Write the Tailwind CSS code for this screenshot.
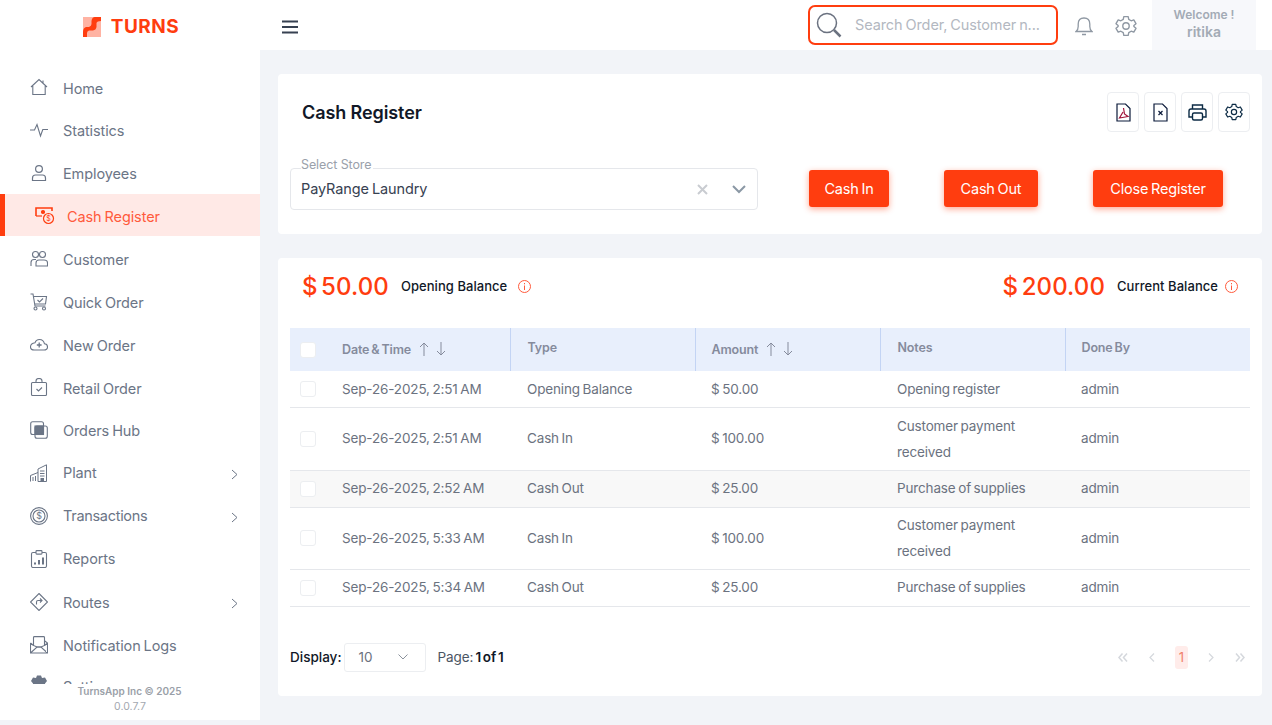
<!DOCTYPE html>
<html>
<head>
    <title>Cash Register</title>
    <script src="https://cdn.jsdelivr.net/npm/@tailwindcss/browser@4"></script>
</head>
<body class="bg-[#f2f4f8] h-[725px] overflow-hidden font-['Inter',sans-serif] text-[#6b7280]">
<div class="flex h-[725px] items-start">
    <!-- Sidebar -->
    <aside class="w-[260px] h-[720px] bg-white shrink-0 overflow-hidden">
        <div class="h-[65px] flex items-center justify-center pl-[2px] pb-[12px] gap-[10px]">
            <svg width="18" height="20" viewBox="0 0 18 20"><rect width="18" height="20" fill="#ffb3a3"/><path d="M18 0H12Q9 0 8.500 4V7Q8.500 9 6 10H3Q0 11 0 15V20H4V16Q4 14 6 13.500H10Q13 13 13.500 10V6Q14 4 18 4Z" fill="#ff3d0f"/></svg>
            <span class="text-[#ff3d0f] text-[19px] leading-none font-bold tracking-[0.5px]">TURNS</span>
        </div>
        <nav class="h-[619px] overflow-hidden text-[14.5px] text-[#6b7586] tracking-[-0.1px] [word-spacing:-1px]">
            <a class="h-[42.86px] flex items-center pl-[30px] gap-[15px]">
                <svg class="w-[18px] h-[18px] translate-y-[1px]" viewBox="0 0 18 18" fill="none" stroke="#6b7586" stroke-width="1.1"><path d="M1 9 9 1.500 17 9M2.800 8V16.500H15.200V8M13 2.500V5"/></svg>
                <span class="pt-[5px]">Home</span>
            </a>
            <a class="h-[42.86px] flex items-center pl-[30px] gap-[15px]">
                <svg class="w-[18px] h-[18px] translate-y-[1px]" viewBox="0 0 18 18" fill="none" stroke="#6b7586" stroke-width="1.1"><path d="M0 9H4.500L7 3.500 10.500 15 12.800 8.500H18"/></svg>
                <span class="pt-[4px]">Statistics</span>
            </a>
            <a class="h-[42.86px] flex items-center pl-[30px] gap-[15px]">
                <svg class="w-[18px] h-[18px] translate-y-[1px]" viewBox="0 0 18 18" fill="none" stroke="#6b7586" stroke-width="1.2"><circle cx="9" cy="5" r="3.400"/><path d="M2.500 16.500V14Q2.500 11 5.500 11H12.500Q15.500 11 15.500 14V16.500Z"/></svg>
                <span class="pt-[4px]">Employees</span>
            </a>
            <a class="h-[42.86px] flex items-center pl-[30px] gap-[12px] bg-[#ffe9e6] border-l-[5px] border-[#ff3d0f] text-[#ff5a3c]">
                <svg class="w-[20px] h-[20px]" viewBox="0 0 20 20" fill="none" stroke="#ff3d0f" stroke-width="1.200"><path d="M1 11V3H17V6M1 3H6M11 3H17" stroke-width="1.600"/><circle cx="8" cy="7" r="1.500" fill="#ff3d0f"/><path d="M1 11H7"/><circle cx="13.500" cy="13.500" r="5"/><text x="13.500" y="16" font-size="7" text-anchor="middle" fill="#ff3d0f" stroke="none">$</text></svg>
                <span class="pt-[4px]">Cash Register</span>
            </a>
            <a class="h-[42.86px] flex items-center pl-[30px] gap-[15px]">
                <svg class="w-[18px] h-[18px] translate-y-[1px]" viewBox="0 0 18 18" fill="none" stroke="#6b7586" stroke-width="1.1"><circle cx="5.500" cy="4.500" r="3"/><circle cx="12.500" cy="4.500" r="3"/><path d="M1 16V12.500Q1 9.500 4 9.500H6M6 16V13Q6 10 9 10H14Q17.500 10 17.500 13V16Z"/></svg>
                <span class="pt-[5px]">Customer</span>
            </a>
            <a class="h-[42.86px] flex items-center pl-[30px] gap-[15px]">
                <svg class="w-[18px] h-[18px] translate-y-[1px]" viewBox="0 0 18 18" fill="none" stroke="#6b7586" stroke-width="1.1"><path d="M.5 1H3L5 13H15.500M4 3.500H16.500L15.500 11H5"/><path d="M7.500 7 9.500 9 13 5.500"/><circle cx="5.500" cy="15.500" r="1.500"/><circle cx="14" cy="15.500" r="1.500"/></svg>
                <span class="pt-[5px]">Quick Order</span>
            </a>
            <a class="h-[42.86px] flex items-center pl-[30px] gap-[15px]">
                <svg class="w-[18px] h-[18px] translate-y-[1px]" viewBox="0 0 18 18" fill="none" stroke="#6b7586" stroke-width="1.1"><path d="M4.500 14H14Q17.500 14 17.500 11 17.500 8 14.500 7.800 13.500 3.500 9.500 3.500 6 3.500 5 6.800 .5 7.500 .5 11 .5 14 4.500 14Z"/><path d="M9.200 6.500V11.500M6.800 9H11.600" stroke-width="1.300"/></svg>
                <span class="pt-[4px]">New Order</span>
            </a>
            <a class="h-[42.86px] flex items-center pl-[30px] gap-[15px]">
                <svg class="w-[18px] h-[18px] translate-y-[1px]" viewBox="0 0 18 18" fill="none" stroke="#6b7586" stroke-width="1.1"><rect x="1.500" y="4.500" width="15" height="13" rx="1"/><path d="M6 4.500V3Q6 .5 9 .5 12 .5 12 3V4.500M6.500 11 8.500 13 12 9.500"/></svg>
                <span class="pt-[4px]">Retail Order</span>
            </a>
            <a class="h-[42.86px] flex items-center pl-[30px] gap-[15px]">
                <svg class="w-[18px] h-[18px] translate-y-[1px]" viewBox="0 0 18 18" fill="none" stroke="#6b7586" stroke-width="1.1"><rect x="5" y="5" width="8.500" height="8.500" fill="#6b7586"/><rect x=".7" y=".7" width="12.800" height="12.800" rx="2"/><rect x="5" y="5" width="12.300" height="12.300" rx="2"/></svg>
                <span class="pt-[4px]">Orders Hub</span>
            </a>
            <a class="h-[42.86px] flex items-center pl-[30px] gap-[15px]">
                <svg class="w-[18px] h-[18px] translate-y-[1px]" viewBox="0 0 18 18" fill="none" stroke="#6b7586" stroke-width="1"><path d="M8 17.500V5L16.500 .8V17.500ZM.5 17.500V11.500L8 8.500M10 7H14.500M10 9.500H14.500M10 12H14.500M3 13V17M5.500 12V17"/><rect x="11" y="14.500" width="2.500" height="3" fill="#6b7586"/></svg>
                <span class="pt-[2px]">Plant</span>
                <svg class="w-[7px] h-[11px] ml-auto mr-[22px] mt-[5px]" viewBox="0 0 7 11" fill="none" stroke="#6b7586" stroke-width="1"><path d="M1 1 6 5.500 1 10"/></svg>
            </a>
            <a class="h-[42.86px] flex items-center pl-[30px] gap-[15px]">
                <svg class="w-[18px] h-[18px] translate-y-[1px]" viewBox="0 0 18 18" fill="none" stroke="#6b7586" stroke-width="1.1"><circle cx="9" cy="9" r="8.400"/><circle cx="9" cy="9" r="6"/><text x="9" y="12" font-size="9" text-anchor="middle" fill="#6b7586" stroke="none">$</text></svg>
                <span class="pt-[2px] tracking-[-0.3px]">Transactions</span>
                <svg class="w-[7px] h-[11px] ml-auto mr-[22px] mt-[5px]" viewBox="0 0 7 11" fill="none" stroke="#6b7586" stroke-width="1"><path d="M1 1 6 5.500 1 10"/></svg>
            </a>
            <a class="h-[42.86px] flex items-center pl-[30px] gap-[15px]">
                <svg class="w-[18px] h-[18px] translate-y-[1px]" viewBox="0 0 18 18" fill="none" stroke="#6b7586" stroke-width="1.1"><rect x="1.500" y="2.500" width="15" height="15" rx="1.500"/><rect x="6" y=".6" width="6" height="3.500" rx=".8" fill="white"/><path d="M5 14.500V12.500M9 14.500V10M13 14.500V7.500" stroke-width="2"/></svg>
                <span class="pt-[2px]">Reports</span>
            </a>
            <a class="h-[42.86px] flex items-center pl-[30px] gap-[15px]">
                <svg class="w-[18px] h-[18px] translate-y-[1px]" viewBox="0 0 18 18" fill="none" stroke="#6b7586" stroke-width="1.1"><path d="M9 .5 17.500 9 9 17.500 .5 9Z"/><path d="M6.500 11.500V9Q6.500 7.500 8 7.500H12M10 5.500 12 7.500 10 9.500"/></svg>
                <span class="pt-[4px]">Routes</span>
                <svg class="w-[7px] h-[11px] ml-auto mr-[22px] mt-[5px]" viewBox="0 0 7 11" fill="none" stroke="#6b7586" stroke-width="1"><path d="M1 1 6 5.500 1 10"/></svg>
            </a>
            <a class="h-[42.86px] flex items-center pl-[30px] gap-[15px]">
                <svg class="w-[18px] h-[18px] translate-y-[1px]" viewBox="0 0 18 18" fill="none" stroke="#6b7586" stroke-width="1.1"><path d="M.5 7V17H17.500V7L14.500 4.800M.5 17 7 11H11L17.500 17M.5 7 3.500 9.500M17.500 7 14.500 9.500"/><path d="M3.500 9.500V1.500Q3.500 .6 4.500 .6H13.500Q14.500 .6 14.500 1.500V9.500L11 11H7Z"/></svg>
                <span class="pt-[4px]">Notification Logs</span>
            </a>
            <a class="h-[42.86px] flex items-center pl-[30px] gap-[15px]">
                <svg class="w-[18px] h-[18px] -translate-y-[2px]" viewBox="0 0 18 18" fill="#6b7586"><path d="M7 .5H11L12 3 15 2.500 17 6 15 8.500V10L17 12.500 15 16 12 15.500 11 18H7L6 15.500 3 16 1 12.500 3 10V8.500L1 6 3 2.500 6 3Z"/></svg>
                <span>Settings</span>
            </a>
        </nav>
        <div class="text-center">
            <p class="text-[10px] leading-[15px] font-semibold text-[#9a9fa8] pr-[1px]">TurnsApp Inc © 2025</p>
            <p class="text-[10.500px] leading-[16px] text-[#a3a8b0]">0.0.7.7</p>
        </div>
    </aside>

    <div class="flex-1 min-w-0">
        <!-- Top bar -->
        <header class="h-[50px] bg-white flex items-center pl-[22px]">
            <svg class="w-[16px] h-[14px] mt-[4px]" viewBox="0 0 16 14" fill="none" stroke="#374151" stroke-width="2"><path d="M0 1.500H16M0 7H16M0 12.500H16"/></svg>
            <div class="ml-auto w-[250px] h-[40px] border-2 border-[#ff3d0f] rounded-[7px] flex items-center pl-[6px]">
                <svg class="w-[26px] h-[26px] shrink-0" viewBox="0 0 26 26" fill="none" stroke="#6b7280"><circle cx="11" cy="11" r="9.500" stroke-width="1.500"/><path d="M18 18 24.500 24.500" stroke-width="2.500"/></svg>
                <span class="ml-[13px] text-[14.5px] text-[#b3b8c1] whitespace-nowrap tracking-[-0.1px] [word-spacing:-1px]">Search Order, Customer n...</span>
            </div>
            <svg class="w-[18px] h-[20px] ml-[17px] mt-[2px]" viewBox="0 0 18 20" fill="none" stroke="#8f98a3" stroke-width="1.300"><path d="M1 15.500H17Q14.800 14 14.800 10.500V8Q14.800 2 9 2 3.200 2 3.200 8V10.500Q3.200 14 1 15.500ZM7 18.500H11" /></svg>
            <svg class="w-[22px] h-[22px] ml-[22px] mt-[2px]" viewBox="0 0 24 24" fill="none" stroke="#8f98a3" stroke-width="1.500"><circle cx="12" cy="12" r="3.500"/><path d="M9.600 1.800H14.400L15 4.800 17.600 6.300 20.500 5.300 22.900 9.500 20.600 11.500V12.500L22.900 14.500 20.500 18.700 17.600 17.700 15 19.200 14.400 22.200H9.600L9 19.200 6.400 17.700 3.500 18.700 1.100 14.500 3.400 12.500V11.500L1.100 9.500 3.500 5.300 6.400 6.300 9 4.800Z" stroke-linejoin="round"/></svg>
            <div class="w-[104px] h-[50px] ml-[15px] mr-[16px] bg-[#f7f8fb] text-center pt-[7px] text-[#a3abb5] font-semibold">
                <p class="text-[12px] leading-[15px]">Welcome !</p>
                <p class="text-[14px] leading-[20px]">ritika</p>
            </div>
        </header>

        <div class="pl-[18px] pr-[10px]">
            <!-- Register card -->
            <section class="mt-[24px] h-[160px] bg-white rounded-[4px] px-[12px]">
                <div class="flex items-center h-[76px] pt-[1px]">
                    <h1 class="ml-[12px] text-[18px] font-semibold text-[#111827] tracking-[-0.1px]">Cash Register</h1>
                    <div class="ml-auto flex gap-[5px] mt-[-1px]">
                        <button class="w-[32px] h-[40px] border border-[#eceef1] rounded-[4px] flex items-center justify-center">
                            <svg width="15" height="19" viewBox="0 0 15 19" fill="none" stroke="#0b1a3a" stroke-width="1.200"><path d="M1 1H9.500L14 5.500V18H1Z"/><path d="M7.500 5 8.500 11 12 13.500 3.500 15 7 9" stroke="#a1163c"/></svg>
                        </button>
                        <button class="w-[32px] h-[40px] border border-[#eceef1] rounded-[4px] flex items-center justify-center">
                            <svg width="15" height="19" viewBox="0 0 15 19" fill="none" stroke="#0b1a3a" stroke-width="1.200"><path d="M1 1H9.500L14 5.500V18H1Z"/><path d="M5.500 8 9.500 12M9.500 8 5.500 12"/></svg>
                        </button>
                        <button class="w-[32px] h-[40px] border border-[#eceef1] rounded-[4px] flex items-center justify-center">
                            <svg width="19" height="17" viewBox="0 0 19 17" fill="none" stroke="#0b2a44" stroke-width="1.400"><path d="M4.500 5V1H14.500V5M4.500 13H1V7Q1 5 3 5H16Q18 5 18 7V13H14.500"/><rect x="4.500" y="9" width="10" height="7" rx="1.500"/></svg>
                        </button>
                        <button class="w-[32px] h-[40px] border border-[#eceef1] rounded-[4px] flex items-center justify-center">
                            <svg width="18" height="18" viewBox="0 0 24 24" fill="none" stroke="#0b2a44" stroke-width="1.600"><circle cx="12" cy="12" r="3.500"/><path d="M9.600 1.800H14.400L15 4.800 17.600 6.300 20.500 5.300 22.900 9.500 20.600 11.500V12.500L22.900 14.500 20.500 18.700 17.600 17.700 15 19.200 14.400 22.200H9.600L9 19.200 6.400 17.700 3.500 18.700 1.100 14.500 3.400 12.500V11.500L1.100 9.500 3.500 5.300 6.400 6.300 9 4.800Z" stroke-linejoin="round"/></svg>
                        </button>
                    </div>
                </div>
                <div class="flex items-start mt-[18px]">
                    <div class="relative w-[468px] h-[42px] border border-[#e5e7eb] rounded-[4px] flex items-center pl-[10px]">
                        <span class="absolute left-[10px] -top-[12px] bg-white pr-[2px] text-[12.500px] leading-[16px] text-[#9aa1ab] tracking-[-0.1px]">Select Store</span>
                        <span class="text-[14.500px] text-[#374151] tracking-[-0.1px] [word-spacing:-1px]">PayRange Laundry</span>
                        <svg class="ml-auto w-[11px] h-[11px]" viewBox="0 0 11 11" fill="none" stroke="#c9ccd1" stroke-width="2"><path d="M1 1 10 10M10 1 1 10"/></svg>
                        <svg class="ml-[24px] mr-[11px] w-[14px] h-[9px]" viewBox="0 0 14 9" fill="none" stroke="#8b98a5" stroke-width="2"><path d="M1 1 7 7 13 1"/></svg>
                    </div>
                    <button class="ml-[51px] mt-[2px] w-[80px] h-[37px] rounded-[3px] bg-[#ff3d0f] text-white text-[14.500px] tracking-[-0.2px] [word-spacing:-1px] shadow-[0_2px_6px_rgba(255,61,15,0.45)]">Cash In</button>
                    <button class="ml-[55px] mt-[2px] w-[94px] h-[37px] rounded-[3px] bg-[#ff3d0f] text-white text-[14.500px] tracking-[-0.2px] [word-spacing:-1px] shadow-[0_2px_6px_rgba(255,61,15,0.45)]">Cash Out</button>
                    <button class="ml-[55px] mt-[2px] w-[130px] h-[37px] rounded-[3px] bg-[#ff3d0f] text-white text-[14.500px] tracking-[-0.2px] [word-spacing:-1px] shadow-[0_2px_6px_rgba(255,61,15,0.45)]">Close Register</button>
                </div>
            </section>

            <!-- Balance and table card -->
            <section class="mt-[24px] h-[438px] bg-white rounded-[4px] px-[12px]">
                <div class="h-[70px] flex items-center pb-[13px] pr-[12px]">
                    <span class="ml-[12px] text-[24px] font-medium text-[#ff3d0f] [word-spacing:-3px] tracking-[0.1px]">$ 50.00</span>
                    <span class="ml-[12px] text-[13px] font-medium text-[#111827] tracking-[0.05px]">Opening Balance</span>
                    <svg class="ml-[11px] w-[13px] h-[13px]" viewBox="0 0 13 13" fill="none" stroke="#ff5a3c"><circle cx="6.500" cy="6.500" r="6"/><path d="M6.500 5.500V10M6.500 3V4.300"/></svg>
                    <span class="ml-auto text-[24px] font-medium text-[#ff3d0f] [word-spacing:-3px] tracking-[0.1px]">$ 200.00</span>
                    <span class="ml-[12px] text-[13px] font-medium text-[#111827] tracking-[0.05px]">Current Balance</span>
                    <svg class="ml-[7px] w-[13px] h-[13px]" viewBox="0 0 13 13" fill="none" stroke="#ff5a3c"><circle cx="6.500" cy="6.500" r="6"/><path d="M6.500 5.500V10M6.500 3V4.300"/></svg>
                </div>
                <table class="w-[960px] table-fixed text-[13.500px] text-[#6b7280] tracking-[-0.15px] [word-spacing:-1px]">
                    <colgroup><col class="w-[52px]"><col class="w-[168px]"><col class="w-[185px]"><col class="w-[185px]"><col class="w-[185px]"><col class="w-[185px]"></colgroup>
                    <thead class="bg-[#e8effc] text-[12.500px] text-[#858b9c] text-left">
                        <tr class="h-[43px]">
                            <th class="pl-[10px]"><div class="w-[16px] h-[16px] bg-white border border-[#eceef1] rounded-[3px]"></div></th>
                            <th class="font-semibold border-r border-[#c3d4f4]">
                                <div class="flex items-center pt-[2px]">Date &amp; Time
                                    <svg class="ml-[8px] w-[10px] h-[14px] -translate-y-[2px]" viewBox="0 0 10 14" fill="none" stroke="#858b9c"><path d="M5 14V1M1 5 5 1 9 5"/></svg>
                                    <svg class="ml-[7px] w-[10px] h-[14px] -translate-y-[2px]" viewBox="0 0 10 14" fill="none" stroke="#858b9c"><path d="M5 0V13M1 9 5 13 9 9"/></svg>
                                </div>
                            </th>
                            <th class="pl-[17px] pb-[2px] font-semibold border-r border-[#c3d4f4]">Type</th>
                            <th class="pl-[16px] font-semibold border-r border-[#c3d4f4]">
                                <div class="flex items-center pt-[2px]">Amount
                                    <svg class="ml-[8px] w-[10px] h-[14px] -translate-y-[2px]" viewBox="0 0 10 14" fill="none" stroke="#858b9c"><path d="M5 14V1M1 5 5 1 9 5"/></svg>
                                    <svg class="ml-[7px] w-[10px] h-[14px] -translate-y-[2px]" viewBox="0 0 10 14" fill="none" stroke="#858b9c"><path d="M5 0V13M1 9 5 13 9 9"/></svg>
                                </div>
                            </th>
                            <th class="pl-[17px] pb-[2px] font-semibold border-r border-[#c3d4f4]">Notes</th>
                            <th class="pl-[16px] pb-[2px] font-semibold">Done By</th>
                        </tr>
                    </thead>
                    <tbody>
                        <tr class="h-[36px] border-b border-[#e5e7eb]">
                            <td class="pl-[10px]"><div class="w-[16px] h-[16px] border border-[#eceef1] rounded-[3px]"></div></td>
                            <td>Sep-26-2025, 2:51 AM</td><td class="pl-[17px]">Opening Balance</td><td class="pl-[16px]">$ 50.00</td><td class="pl-[17px]">Opening register</td><td class="pl-[16px]">admin</td>
                        </tr>
                        <tr class="h-[63px] border-b border-[#e5e7eb]">
                            <td class="pl-[10px]"><div class="w-[16px] h-[16px] border border-[#eceef1] rounded-[3px]"></div></td>
                            <td>Sep-26-2025, 2:51 AM</td><td class="pl-[17px]">Cash In</td><td class="pl-[16px]">$ 100.00</td><td class="pl-[17px] leading-[26px]">Customer payment received</td><td class="pl-[16px]">admin</td>
                        </tr>
                        <tr class="h-[37px] border-b border-[#e5e7eb] bg-[#f8f8f8]">
                            <td class="pl-[10px]"><div class="w-[16px] h-[16px] bg-white border border-[#eceef1] rounded-[3px]"></div></td>
                            <td>Sep-26-2025, 2:52 AM</td><td class="pl-[17px]">Cash Out</td><td class="pl-[16px]">$ 25.00</td><td class="pl-[17px]">Purchase of supplies</td><td class="pl-[16px]">admin</td>
                        </tr>
                        <tr class="h-[62px] border-b border-[#e5e7eb]">
                            <td class="pl-[10px]"><div class="w-[16px] h-[16px] border border-[#eceef1] rounded-[3px]"></div></td>
                            <td>Sep-26-2025, 5:33 AM</td><td class="pl-[17px]">Cash In</td><td class="pl-[16px]">$ 100.00</td><td class="pl-[17px] leading-[26px]">Customer payment received</td><td class="pl-[16px]">admin</td>
                        </tr>
                        <tr class="h-[37px] border-b border-[#e5e7eb]">
                            <td class="pl-[10px]"><div class="w-[16px] h-[16px] border border-[#eceef1] rounded-[3px]"></div></td>
                            <td>Sep-26-2025, 5:34 AM</td><td class="pl-[17px]">Cash Out</td><td class="pl-[16px]">$ 25.00</td><td class="pl-[17px]">Purchase of supplies</td><td class="pl-[16px]">admin</td>
                        </tr>
                    </tbody>
                </table>
                <div class="flex items-center mt-[36px] h-[29px]">
                    <span class="text-[13.500px] font-medium text-[#111827]">Display:</span>
                    <div class="ml-[3px] w-[82px] h-[29px] border border-[#eceef1] rounded-[3px] flex items-center pl-[13px] text-[13.500px] text-[#6b7280]">10
                        <svg class="ml-[25px] w-[10px] h-[6px]" viewBox="0 0 10 6" fill="none" stroke="#8b929c"><path d="M.5 .5 5 5 9.500 .5"/></svg>
                    </div>
                    <span class="ml-[11px] text-[13.500px] text-[#4b5563] tracking-[-0.1px] [word-spacing:-1.5px]">Page: <b class="font-semibold text-[#111827]">1 of 1</b></span>
                    <div class="ml-auto flex items-center mr-[5px]">
                        <svg class="w-[10px] h-[9px]" viewBox="0 0 10 9" fill="none" stroke="#d5d8dd" stroke-width="1.500"><path d="M4.500 .5 1 4.500 4.500 8.500M9 .5 5.500 4.500 9 8.500"/></svg>
                        <svg class="ml-[21px] w-[6px] h-[9px]" viewBox="0 0 6 9" fill="none" stroke="#d5d8dd" stroke-width="1.200"><path d="M5 .5 1 4.500 5 8.500"/></svg>
                        <span class="ml-[20px] w-[13px] h-[23px] bg-[#ffecea] rounded-[3px] text-center text-[13px] leading-[23px] text-[#f0806b]">1</span>
                        <svg class="ml-[20px] w-[6px] h-[9px]" viewBox="0 0 6 9" fill="none" stroke="#d5d8dd" stroke-width="1.200"><path d="M1 .5 5 4.500 1 8.500"/></svg>
                        <svg class="ml-[21px] w-[10px] h-[9px]" viewBox="0 0 10 9" fill="none" stroke="#d5d8dd" stroke-width="1.500"><path d="M1 .5 4.500 4.500 1 8.500M5.500 .5 9 4.500 5.500 8.500"/></svg>
                    </div>
                </div>
            </section>
        </div>
    </div>
</div>
</body>
</html>
